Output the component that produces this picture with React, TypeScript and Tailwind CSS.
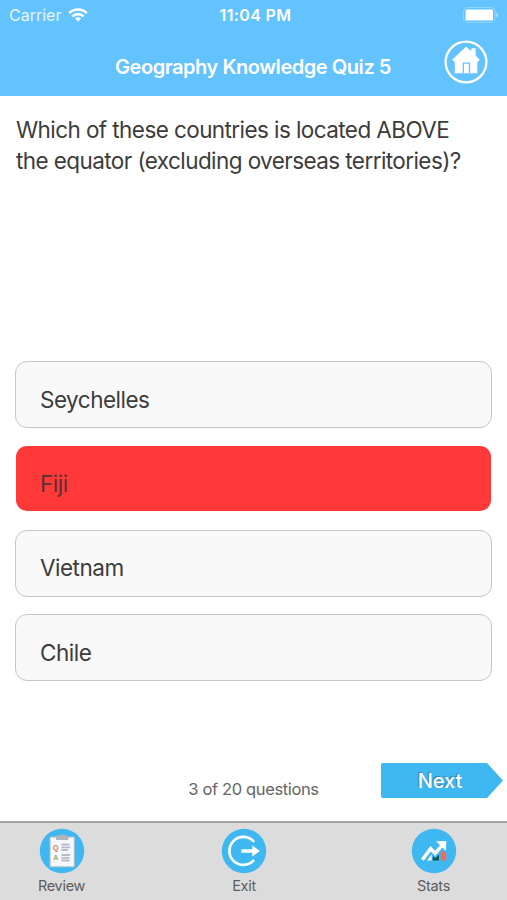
import clsx from 'clsx';

const answers = [
  { label: 'Seychelles', wrong: false },
  { label: 'Fiji', wrong: true },
  { label: 'Vietnam', wrong: false },
  { label: 'Chile', wrong: false },
];

function WifiIcon() {
  return (
    <svg width="20" height="14" viewBox="0 0 20 14" fill="none" stroke="white" strokeWidth="2.6">
      <path d="M1.2 5.1a12.6 12.6 0 0 1 17.6 0" />
      <path d="M4.3 8.4a8.2 8.2 0 0 1 11.4 0" />
      <path d="M10 13.6 6.9 10.5a4.4 4.4 0 0 1 6.2 0Z" fill="white" stroke="none" />
    </svg>
  );
}

function BatteryIcon() {
  return (
    <svg width="36" height="16" viewBox="0 0 36 16">
      <rect x="0.5" y="0.5" width="31.5" height="15" rx="4" fill="none" stroke="white" strokeOpacity="0.3" />
      <rect x="2.5" y="2.6" width="27.5" height="10.8" rx="1.5" fill="white" />
      <path d="M33.4 5.5c2.3 1 2.3 4 0 5Z" fill="white" fillOpacity="0.5" />
    </svg>
  );
}

function HomeIcon() {
  return (
    <svg width="44" height="44" viewBox="0 0 44 44">
      <circle cx="22" cy="22" r="20.4" fill="none" stroke="white" strokeWidth="2.3" />
      <path d="M22 6.8 27.3 11V8.3h4.3v7.2l3.9 4-1 1.9h-1.2v11.9H10.8V21.4H9.4L8.4 19.6Z" fill="white" />
      <path d="M19.3 33.3v-10.1h6.2v10.1" fill="none" stroke="#62c3ff" strokeWidth="1.3" />
    </svg>
  );
}

function ReviewIcon() {
  return (
    <svg width="46" height="46" viewBox="0 0 46 46">
      <circle cx="23" cy="23" r="22.2" fill="#3fb8f2" />
      <rect x="10.6" y="8.6" width="25.2" height="30.6" rx="1" fill="#b7c1c8" />
      <rect x="11.6" y="9.6" width="23.2" height="28.6" fill="#f5f7f8" />
      <path d="M17 7.7h3.2v-1h6v1h3.1v4.4H17Z" fill="#adb6bb" />
      <text x="14" y="21.5" className="font-['Liberation_Sans',sans-serif] text-[7px] font-bold" fill="#e5704c">Q</text>
      <text x="14.2" y="31.7" className="font-['Liberation_Sans',sans-serif] text-[7px] font-bold" fill="#9aab70">A</text>
      <path d="M22.5 16.5h8M22.5 19.3h8.8M22.5 22h6.5M22.5 27h8.5M22.5 29.8h8M22.5 32.5h8" stroke="#b3bdce" strokeWidth="1.8" />
    </svg>
  );
}

function ExitIcon() {
  return (
    <svg width="46" height="46" viewBox="0 0 46 46">
      <circle cx="23" cy="23" r="22.2" fill="#3fb8f2" />
      <path d="M32.4 13.1A14 14 0 1 0 32.4 32.7" fill="none" stroke="white" strokeWidth="2.6" strokeLinecap="round" />
      <path d="M20.3 21.2h11v-3.8l7.6 5.6-7.6 5.6v-3.8h-11Z" fill="white" />
    </svg>
  );
}

function StatsIcon() {
  return (
    <svg width="46" height="46" viewBox="0 0 46 46">
      <circle cx="23" cy="23" r="22.2" fill="#3fb8f2" />
      <path d="M16 32.6 20.6 26.6V32.6Z" fill="white" />
      <path d="M21.8 28.3 24.5 30l3.5-3.5v6.1h-6.2Z" fill="#0b5a4b" />
      <path d="M29.8 25.2 32.5 22.4 35.3 26v6.6h-5.5Z" fill="#ee6b62" />
      <path d="m11.3 31.8 8.3-11 4.5 4.6 7.7-8.8" fill="none" stroke="white" strokeWidth="3.5" />
      <path d="m25 13.3 10.3-.4-.3 10.2Z" fill="white" />
    </svg>
  );
}

export default function App() {
  return (
    <div className="flex h-[900px] w-[507px] flex-col overflow-hidden bg-white font-[Inter,sans-serif] text-[#3c3c3c]">
      <header className="h-24 shrink-0 bg-[#62c3ff] text-white">
        <div className="grid h-[30px] grid-cols-3 items-center pl-[9px] pr-[8px]">
          <div className="flex items-center gap-[7px] text-base">
            <span className="opacity-85">Carrier</span>
            <WifiIcon />
          </div>
          <span className="pl-[3px] text-center text-base font-semibold tracking-[0.35px]">11:04 PM</span>
          <div className="flex justify-end">
            <BatteryIcon />
          </div>
        </div>
        <div className="grid grid-cols-[1fr_auto_1fr] items-center pt-[10px]">
          <h1 className="col-start-2 pt-[10px] pr-px text-[20px] leading-6 font-semibold tracking-[-0.45px]">
            Geography Knowledge Quiz 5
          </h1>
          <button className="mr-[19px] justify-self-end">
            <HomeIcon />
          </button>
        </div>
      </header>

      <main className="flex flex-1 flex-col">
        <p className="h-[265px] pt-[18px] pl-4 text-[22.5px] leading-[31px] tracking-[-0.58px] whitespace-nowrap">
          Which of these countries is located ABOVE
          <br />
          the equator (excluding overseas territories)?
        </p>

        <ul className="flex flex-col gap-[17.3px] px-[15px]">
          {answers.map((answer) => (
            <li
              key={answer.label}
              className={clsx(
                'flex h-[67px] items-center rounded-xl border pt-[10px] pl-6 text-[22.5px] tracking-[-0.5px]',
                answer.wrong
                  ? 'border-transparent bg-[#ff3838] bg-clip-padding text-[#5c3030]'
                  : 'border-[#c6c6c6] bg-[#f9f9f9]',
              )}
            >
              {answer.label}
            </li>
          ))}
        </ul>

        <div className="mt-auto grid h-[58px] grid-cols-[1fr_auto_1fr] items-start">
          <p className="col-start-2 pt-[14px] text-[16.5px] tracking-[-0.36px] text-[#666]">3 of 20 questions</p>
          <button className="mr-[4px] flex h-[35px] w-[122px] items-center justify-center justify-self-end rounded-l-xs bg-[#3fb8f2] pr-[4px] text-[20px] font-medium text-white [clip-path:polygon(0_0,106px_0,100%_50%,106px_100%,0_100%)] [text-shadow:-1px_-1px_1px_rgba(60,90,110,0.6)]">
            Next
          </button>
        </div>
      </main>

      <footer className="grid h-[79px] shrink-0 grid-cols-[124px_240px_140px] justify-start border-t-2 border-[#a5a5a5] bg-[#dcdcdc] pt-[5px] text-[14.5px] tracking-[-0.3px] text-[#5c5c5c]">
        <button className="flex flex-col items-center gap-px">
          <ReviewIcon />
          <span className="pr-px">Review</span>
        </button>
        <button className="flex flex-col items-center gap-px">
          <ExitIcon />
          <span>Exit</span>
        </button>
        <button className="flex flex-col items-center gap-px">
          <StatsIcon />
          <span className="pr-px">Stats</span>
        </button>
      </footer>
    </div>
  );
}
